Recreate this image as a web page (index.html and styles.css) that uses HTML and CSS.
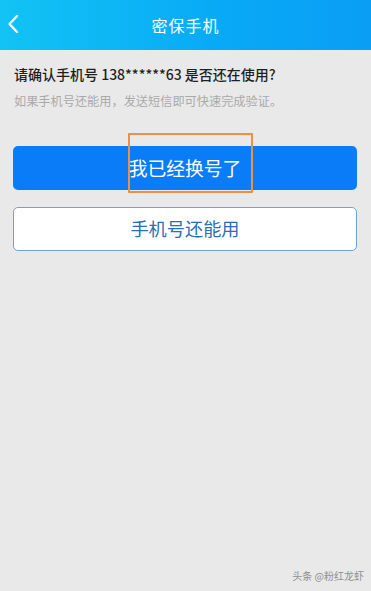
FILE: index.html
```html
<!DOCTYPE html>
<html lang="zh">
<head>
<meta charset="utf-8">
<link rel="stylesheet" href="styles.css">
</head>
<body>
<div class="page">
  <header class="bar">
    <svg class="back" width="12" height="20" viewBox="0 0 12 20"><path d="M10 2 L2.5 10 L10 18" fill="none" stroke="#ffffff" stroke-width="2.2" stroke-linecap="round" stroke-linejoin="round"/></svg>
    <div class="title">密保手机</div>
  </header>
  <main class="content">
    <p class="q">请确认手机号 138******63 是否还在使用?</p>
    <p class="hint">如果手机号还能用，发送短信即可快速完成验证。</p>
    <div class="btn primary">
      <span class="label">我已经换号了</span>
      <span class="mark"></span>
    </div>
    <div class="btn secondary"><span class="label">手机号还能用</span></div>
  </main>
  <div class="wm">头条 @粉红龙虾</div>
</div>
</body>
</html>
```
FILE: styles.css
```css
html, body { margin: 0; padding: 0; }
body {
  width: 371px;
  height: 591px;
  background: #e9e9e9;
  font-family: "Noto Sans CJK SC", "Noto Sans", sans-serif;
  overflow: hidden;
}
.page { position: relative; width: 371px; height: 591px; }
.bar {
  position: relative;
  height: 50px;
  background: linear-gradient(90deg, #12c3f4 0%, #08a9f6 60%, #0a9ef5 100%);
  display: flex;
  align-items: center;
  justify-content: center;
}
.back { position: absolute; left: 7px; top: 14px; }
.title { color: #fff; font-size: 16px; letter-spacing: 1px; }
.content { padding: 14px 13px 0 14px; }
.q {
  margin: 0;
  font-size: 14px;
  color: #1f1f1f;
  font-weight: 500;
  line-height: 20px;
}
.hint {
  margin: 9px 0 0;
  font-size: 12.2px;
  color: #a9a9a9;
  line-height: 16px;
}
.btn {
  position: relative;
  box-sizing: border-box;
  height: 44px;
  border-radius: 5px;
  display: flex;
  align-items: center;
  justify-content: center;
  margin-right: 1px;
  margin-left: -1px;
}
.primary { margin-top: 37px; background: #0a7cf8; color: #fff; font-size: 18.8px; }
.secondary {
  margin-top: 17px;
  height: 44px;
  background: #fff;
  border: 1.5px solid #6ea3d6;
  color: #2c6db5;
  font-size: 18.2px;
}
.label { position: relative; top: -1px; }
.mark {
  position: absolute;
  left: 115px;
  top: -13px;
  width: 125px;
  height: 60px;
  box-sizing: border-box;
  border: 2.5px solid #ef8f46;
  border-radius: 1px;
}
.wm {
  position: absolute;
  right: 7px;
  bottom: 8px;
  font-size: 10px;
  color: #8e8e8e;
}
```
